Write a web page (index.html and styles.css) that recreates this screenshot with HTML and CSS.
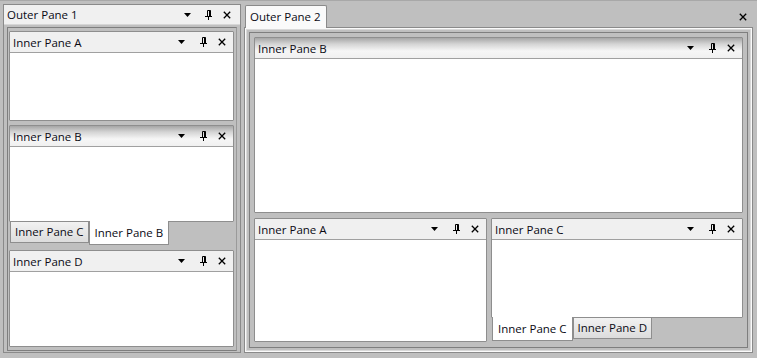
FILE: index.html
```html
<!DOCTYPE html>
<html>
<head>
<meta charset="utf-8">
<link rel="stylesheet" href="styles.css">
</head>
<body>
<svg width="0" height="0" class="defs">
  <defs>
    <symbol id="i-down" viewBox="0 0 7 4"><path d="M0 0H7L3.5 4Z" fill="#000"/></symbol>
    <symbol id="i-pin" viewBox="0 0 7 10"><path d="M2.5 0.5H5.5V6M2.5 0.5V6M0 6.5H7M3.5 6.5V10" fill="none" stroke="#000" stroke-width="1"/><rect x="4" y="0.5" width="1.5" height="6" fill="#000"/></symbol>
    <symbol id="i-close" viewBox="0 0 8 8"><path d="M0.8 0.8L7.2 7.2M7.2 0.8L0.8 7.2" stroke="#000" stroke-width="1.3" fill="none"/></symbol>
  </defs>
</svg>
<div class="root">
  <section class="outer outer1">
    <div class="outer-head">
      <span class="title">Outer Pane 1</span>
      <span class="icons">
        <svg class="ic down"><use href="#i-down"/></svg>
        <svg class="ic pin"><use href="#i-pin"/></svg>
        <svg class="ic close"><use href="#i-close"/></svg>
      </span>
    </div>
    <div class="outer-body">
      <div class="frame col">
        <div class="pane pa">
          <div class="pane-head"><span class="title">Inner Pane A</span>
            <span class="icons"><svg class="ic down"><use href="#i-down"/></svg><svg class="ic pin"><use href="#i-pin"/></svg><svg class="ic close"><use href="#i-close"/></svg></span></div>
          <div class="pane-body"></div>
        </div>
        <div class="group pb">
          <div class="pane tabbed">
            <div class="pane-head active"><span class="title">Inner Pane B</span>
              <span class="icons"><svg class="ic down"><use href="#i-down"/></svg><svg class="ic pin"><use href="#i-pin"/></svg><svg class="ic close"><use href="#i-close"/></svg></span></div>
            <div class="pane-body"></div>
          </div>
          <div class="tabs">
            <span class="tab">Inner Pane C</span>
            <span class="tab sel">Inner Pane B</span>
          </div>
        </div>
        <div class="pane pd">
          <div class="pane-head"><span class="title">Inner Pane D</span>
            <span class="icons"><svg class="ic down"><use href="#i-down"/></svg><svg class="ic pin"><use href="#i-pin"/></svg><svg class="ic close"><use href="#i-close"/></svg></span></div>
          <div class="pane-body"></div>
        </div>
      </div>
    </div>
  </section>
  <section class="outer2">
    <div class="doc-tabs">
      <span class="doc-tab">Outer Pane 2</span>
      <svg class="ic close doc-close"><use href="#i-close"/></svg>
    </div>
    <div class="doc-body">
      <div class="frame2">
        <div class="pane p2b">
          <div class="pane-head active"><span class="title">Inner Pane B</span>
            <span class="icons"><svg class="ic down"><use href="#i-down"/></svg><svg class="ic pin"><use href="#i-pin"/></svg><svg class="ic close"><use href="#i-close"/></svg></span></div>
          <div class="pane-body"></div>
        </div>
        <div class="row2">
          <div class="pane p2a">
            <div class="pane-head"><span class="title">Inner Pane A</span>
              <span class="icons"><svg class="ic down"><use href="#i-down"/></svg><svg class="ic pin"><use href="#i-pin"/></svg><svg class="ic close"><use href="#i-close"/></svg></span></div>
            <div class="pane-body"></div>
          </div>
          <div class="group p2c">
            <div class="pane tabbed">
              <div class="pane-head"><span class="title">Inner Pane C</span>
                <span class="icons"><svg class="ic down"><use href="#i-down"/></svg><svg class="ic pin"><use href="#i-pin"/></svg><svg class="ic close"><use href="#i-close"/></svg></span></div>
              <div class="pane-body"></div>
            </div>
            <div class="tabs">
              <span class="tab sel">Inner Pane C</span>
              <span class="tab">Inner Pane D</span>
            </div>
          </div>
        </div>
      </div>
    </div>
  </section>
</div>
</body>
</html>
```
FILE: styles.css
```css
* { box-sizing: border-box; }
html, body { margin: 0; padding: 0; }
body {
  width: 757px;
  height: 358px;
  background: #bfbfbf;
  font-family: "Open Sans", "Liberation Sans", sans-serif;
  font-size: 11.5px;
  color: #0a0a14;
  overflow: hidden;
}
.defs { position: absolute; }
.root {
  display: flex;
  gap: 3px;
  padding: 3px 4px 5px 3px;
  height: 358px;
  border-top: 1px solid #a8a8a8;
}
.outer1 {
  width: 238px;
  display: flex;
  flex-direction: column;
  border: 1px solid #8a8a8a;
  background: #bfbfbf;
}
.outer-head {
  height: 23px;
  background: #f0f0f0;
  border-bottom: 1px solid #d6d6d6;
  display: flex;
  align-items: center;
  padding: 0 4px 0 3px;
}
.title { flex: 1; white-space: nowrap; line-height: 15px; }
.icons { display: flex; align-items: center; }
.ic { display: block; }
.ic.down { width: 7px; height: 4px; }
.ic.pin { width: 7px; height: 10px; margin-left: 15px; }
.ic.close { width: 8px; height: 8px; margin-left: 11px; }
.outer-head .icons { padding-right: 5px; }
.outer-head .ic.pin { margin-left: 14px; }
.outer-body {
  flex: 1;
  padding: 2px 3px 1px 3px;
  display: flex;
}
.frame {
  flex: 1;
  border: 1px solid #7e7e7e;
  border-right-color: #9a9a9a;
  padding: 3px 2px 3px 1px;
}
.col { display: flex; flex-direction: column; gap: 4px; }
.pane {
  border: 1px solid #8e8e8e;
  background: #fff;
  display: flex;
  flex-direction: column;
  border-radius: 1px;
}
.pane-head {
  height: 21px;
  background: #f0f0f0;
  border-bottom: 1px solid #a0a0a0;
  display: flex;
  align-items: center;
  padding: 0 7px 0 3px;
  flex-shrink: 0;
}
.pane-head.active {
  background: linear-gradient(to bottom, #a6a6a6 0%, #d4d4d4 30%, #f6f6f6 65%, #f0f0f0 100%);
}
.pane-body { flex: 1; }
.pa { height: 90px; }
.pb { height: 121px; }
.pd { height: 97px; }
.group { display: flex; flex-direction: column; }
.tabbed { flex: 1; }
.tabs { display: flex; height: 24px; padding-left: 1px; }
.tab {
  height: 21px;
  padding: 0 4px 0 4px;
  border: 1px solid #8e8e8e;
  border-top: none;
  background: linear-gradient(to bottom, #f2f2f2, #dcdcdc);
  line-height: 19px;
  white-space: nowrap;
}
.tab.sel {
  background: #fff;
  height: 24px;
  margin-top: -1px;
  line-height: 23px;
  padding: 0 5px;
}

.outer2 {
  flex: 1;
  display: flex;
  flex-direction: column;
}
.doc-tabs {
  height: 23px;
  display: flex;
  align-items: flex-end;
  padding-left: 1px;
  position: relative;
}
.doc-tab {
  height: 23px;
  padding: 0 5px 0 4px;
  background: #fafafa;
  border: 1px solid #8a8a8a;
  border-bottom: none;
  border-radius: 2px 2px 0 0;
  line-height: 21px;
  margin-bottom: -1px;
  position: relative;
  z-index: 1;
}
.doc-close { position: absolute; right: 6px; top: 9px; }
.doc-tabs .ic.close { margin-left: 0; }
.doc-body {
  flex: 1;
  border: 1px solid #8a8a8a;
  background: #fafafa;
  padding: 1px;
  display: flex;
}
.frame2 {
  flex: 1;
  background: #bfbfbf;
  border: 1px solid #d8d8d8;
  box-shadow: inset 0 0 0 2px #bfbfbf, inset 0 0 0 3px #7e7e7e;
  padding: 7px 7px 8px 7px;
  display: flex;
  flex-direction: column;
  gap: 5px;
}
.p2b { height: 176px; }
.row2 { flex: 1; display: flex; gap: 4px; }
.p2a { width: 233px; }
.p2c { flex: 1; }
```
